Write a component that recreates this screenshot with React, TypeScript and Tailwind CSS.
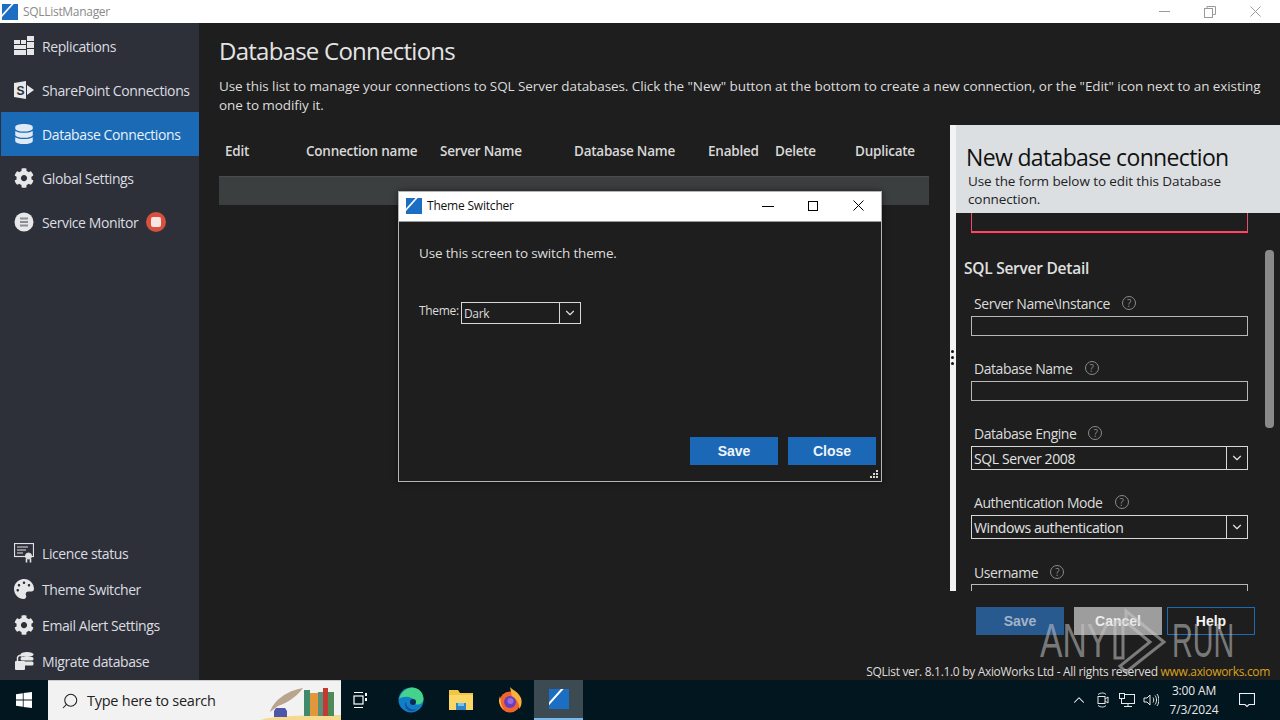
import { ChevronDown, ChevronUp, Search } from "lucide-react";
import { FaCog, FaDatabase, FaPalette } from "react-icons/fa";

const font = "font-['Open_Sans','Liberation_Sans',sans-serif]";

function AppLogo({ className }: { className?: string }) {
  return (
    <svg viewBox="0 0 16 16" className={className}>
      <rect width="16" height="16" fill="#1b6ec2" />
      <path d="M0 10.500L9.500 0h2.200L0 13z" fill="#fff" />
    </svg>
  );
}

function ReplicationsIcon() {
  return (
    <svg viewBox="0 0 20 20" className="h-5 w-5" fill="#e4e6e8">
      <rect x="0" y="4" width="6" height="4" />
      <rect x="0" y="9" width="12" height="4" />
      <rect x="0" y="14" width="12" height="5" />
      <rect x="7" y="4" width="5" height="4" />
      <rect x="13" y="0" width="7" height="5" />
      <rect x="13" y="6" width="7" height="6" />
      <rect x="13" y="13" width="7" height="6" />
    </svg>
  );
}

function SharePointIcon() {
  return (
    <svg viewBox="0 0 20 20" className="h-5 w-5">
      <path d="M0 3l12-2v18L0 17z" fill="#e8e9ea" />
      <path d="M13 5l7 5-7 5z" fill="#e8e9ea" />
      <text x="2.500" y="14.500" fontSize="12" fontWeight="700" fill="#2d3039" fontFamily="Liberation Sans">S</text>
    </svg>
  );
}

function MonitorIcon() {
  return (
    <svg viewBox="0 0 20 20" className="h-5 w-5">
      <circle cx="10" cy="10" r="9.500" fill="#e6e7e8" />
      <path d="M6 6.500h8M6 10h8M6 13.500h8" stroke="#8b8d91" strokeWidth="2" />
    </svg>
  );
}

function LicenceIcon() {
  return (
    <svg viewBox="0 0 20 20" className="h-5 w-5" fill="none" stroke="#dfe1e3">
      <rect x="0.500" y="0.500" width="19" height="13" strokeWidth="1.200" />
      <path d="M3 4h11M3 7h9M3 10h6" strokeWidth="1.200" />
      <circle cx="14.500" cy="13" r="3" fill="#dfe1e3" />
      <path d="M12.500 15.500v4M16.500 15.500v4" strokeWidth="1.600" />
    </svg>
  );
}

function MigrateIcon() {
  return (
    <svg viewBox="0 0 20 20" className="h-5 w-5" fill="#e6e7e8">
      <ellipse cx="13" cy="3.500" rx="6.500" ry="2.500" />
      <rect x="6.500" y="6" width="13" height="3.500" rx="1.500" />
      <rect x="6.500" y="10.500" width="13" height="4" rx="1.500" />
      <rect x="1" y="10" width="10" height="9" rx="1" />
      <path d="M3.500 10V6.500a3 3 0 0 1 5 -1" fill="none" stroke="#e6e7e8" strokeWidth="1.500" />
    </svg>
  );
}

const navTop = [
  { label: "Replications", icon: <ReplicationsIcon /> },
  { label: "SharePoint Connections", icon: <SharePointIcon /> },
  { label: "Database Connections", icon: <FaDatabase className="h-5 w-5 text-[#dfeaf5]" />, active: true },
  { label: "Global Settings", icon: <FaCog className="h-5 w-5 text-[#e6e7e8]" /> },
  { label: "Service Monitor", icon: <MonitorIcon />, badge: true },
];

const navBottom = [
  { label: "Licence status", icon: <LicenceIcon /> },
  { label: "Theme Switcher", icon: <FaPalette className="h-5 w-5 text-[#e6e7e8]" /> },
  { label: "Email Alert Settings", icon: <FaCog className="h-5 w-5 text-[#e6e7e8]" /> },
  { label: "Migrate database", icon: <MigrateIcon /> },
];

const columns = [
  { label: "Edit", className: "w-[81px]" },
  { label: "Connection name", className: "w-[134px]" },
  { label: "Server Name", className: "w-[134px]" },
  { label: "Database Name", className: "w-[134px]" },
  { label: "Enabled", className: "w-[67px]" },
  { label: "Delete", className: "w-[80px]" },
  { label: "Duplicate", className: "w-[70px]" },
];

function Sidebar() {
  return (
    <aside className="flex w-[199px] shrink-0 flex-col justify-between bg-[#2d3039] pt-px pb-px text-[14px] tracking-[-0.4px] text-[#dcdde0]">
      <nav className="flex flex-col">
        {navTop.map((item) => (
          <div
            key={item.label}
            className={
              item.active
                ? "ml-[1px] flex h-11 items-center gap-2 bg-[#1b6ab5] pl-[13px] text-[#e8f1fa]"
                : "flex h-11 items-center gap-2 pl-[14px]"
            }
          >
            {item.icon}
            <span>{item.label}</span>
            {item.badge && (
              <span className="flex h-5 w-5 items-center justify-center rounded-full bg-[#d9503f]">
                <span className="h-[10px] w-[10px] rounded-[2px] bg-[#f5e6e3]" />
              </span>
            )}
          </div>
        ))}
      </nav>
      <nav className="flex flex-col">
        {navBottom.map((item) => (
          <div key={item.label} className="flex h-9 items-center gap-2 pl-[14px]">
            {item.icon}
            <span>{item.label}</span>
          </div>
        ))}
      </nav>
    </aside>
  );
}

function Help() {
  return (
    <span className="ml-[12px] flex h-[14px] w-[14px] items-center justify-center rounded-full border border-[#8a8a8a] text-[10px] leading-none text-[#8a8a8a]">
      ?
    </span>
  );
}

function Label({ text, className }: { text: string; className: string }) {
  return (
    <div className={`ml-[18px] flex h-[18px] items-center text-[14px] tracking-[-0.45px] text-[#dcdcdc] ${className}`}>
      {text}
      <Help />
    </div>
  );
}

function SelectBox({ value, className }: { value: string; className: string }) {
  return (
    <div className={`ml-[15px] flex h-6 w-[277px] items-center border border-[#d8d8d8] pl-[2px] text-[14px] tracking-[-0.4px] text-[#e4e4e4] ${className}`}>
      <span className="flex-1">{value}</span>
      <span className="flex h-full w-[21px] items-center justify-center border-l border-[#d8d8d8]">
        <ChevronDown size={14} strokeWidth={2} />
      </span>
    </div>
  );
}

function ConnectionPanel() {
  return (
    <div className="flex h-[466px]">
      <div className="relative w-[6px] shrink-0 bg-[#f3f3f3]">
        <div className="absolute top-[225px] left-[1px] flex flex-col gap-[3px]">
          {[0, 1, 2].map((i) => (
            <span key={i} className="h-[3px] w-[3px] rounded-full bg-[#111]" />
          ))}
        </div>
      </div>
      <div className="flex min-w-0 flex-1 flex-col">
        <div className="h-[88px] shrink-0 bg-[#dcdfe2] pt-[16px] pl-[10px] text-[#111]">
          <div className="h-[31px] text-[23px] leading-[32px] tracking-[-0.65px]">New database connection</div>
          <div className="ml-[2px] w-[290px] text-[13.5px] leading-[18px] tracking-[-0.1px] text-[#222]">
            Use the form below to edit this Database connection.
          </div>
        </div>
        <div className="flex min-h-0 flex-1">
          <div className="w-[309px] shrink-0 overflow-hidden">
            <div className="ml-[15px] h-5 w-[277px] border-x border-b-2 border-x-[#e8506a] border-b-[#e8506a] shadow-[0_1px_1px_#5a0a12]" />
            <div className="mt-[25px] ml-[8px] h-5 text-[15.5px] leading-5 font-semibold tracking-[-0.25px] text-[#e0e0e0]">
              SQL Server Detail
            </div>
            <Label text="Server Name\Instance" className="mt-[16px]" />
            <div className="mt-[4px] ml-[15px] h-5 w-[277px] border border-[#b8b8b8]" />
            <Label text="Database Name" className="mt-[23px]" />
            <div className="mt-[4px] ml-[15px] h-5 w-[277px] border border-[#b8b8b8]" />
            <Label text="Database Engine" className="mt-[23px]" />
            <SelectBox value="SQL Server 2008" className="mt-[4px]" />
            <Label text="Authentication Mode" className="mt-[23px]" />
            <SelectBox value="Windows authentication" className="mt-[4px]" />
            <Label text="Username" className="mt-[24px]" />
            <div className="mt-[3px] ml-[15px] h-5 w-[277px] border border-[#b8b8b8]" />
          </div>
          <div className="mt-[37px] h-[178px] w-[9px] rounded-[4px] bg-[#8a8a8a]" />
        </div>
      </div>
    </div>
  );
}

function ThemeDialog() {
  return (
    <div className="absolute top-[191px] left-[398px] flex h-[291px] w-[484px] flex-col border border-[#b4b4b4] bg-[#1e1e1e] shadow-[0_0_6px_rgba(0,0,0,0.5)]">
      <div className="flex h-[30px] shrink-0 items-center border-b border-[#9a9a9a] bg-white pb-[2px] pl-[7px] text-[12px] tracking-[-0.2px] text-[#111]">
        <AppLogo className="h-4 w-4" />
        <span className="ml-[5px] flex-1">Theme Switcher</span>
        <div className="mr-[-1px] flex items-center text-black">
          <span className="flex w-[46px] justify-center pl-[2px]">
            <svg viewBox="0 0 12 12" className="h-3 w-3" stroke="currentColor">
              <path d="M0 6.500h12" />
            </svg>
          </span>
          <span className="flex w-[46px] justify-center">
            <svg viewBox="0 0 10 10" className="h-[10px] w-[10px]" fill="none" stroke="currentColor">
              <rect x="0.500" y="0.500" width="9" height="9" />
            </svg>
          </span>
          <span className="flex w-[46px] justify-center pr-[1px]">
            <svg viewBox="0 0 11 11" className="h-[11px] w-[11px]" fill="none" stroke="currentColor">
              <path d="M0.500 0.500l10 10M10.500 0.500l-10 10" />
            </svg>
          </span>
        </div>
      </div>
      <div className="relative flex flex-1 flex-col px-5 pt-[21px] text-[#dcdcdc]">
        <p className="text-[13.5px] leading-5 tracking-[-0.175px]">Use this screen to switch theme.</p>
        <div className="mt-[39px] flex items-center gap-[2px] text-[12px] tracking-[-0.3px]">
          <span className="-mt-[4px]">Theme:</span>
          <div className="flex h-[22px] w-[120px] items-center border border-[#d8d8d8] pl-[2px]">
            <span className="flex-1 pt-[1px]">Dark</span>
            <span className="flex h-full w-[21px] items-center justify-center border-l border-[#d8d8d8]">
              <ChevronDown size={14} strokeWidth={2} />
            </span>
          </div>
        </div>
        <div className="mt-[113px] mr-[-15px] flex justify-end gap-[10px] font-['Liberation_Sans',sans-serif] text-[14px] font-bold text-[#f0f4f8]">
          <button className="h-7 w-[88px] bg-[#1b69b6]">Save</button>
          <button className="h-7 w-[88px] bg-[#1b69b6]">Close</button>
        </div>
        <div className="absolute right-[3px] bottom-[3px] grid grid-cols-3 gap-[1px]">
          {[0, 0, 1, 0, 1, 1, 1, 1, 1].map((on, i) => (
            <span key={i} className={on ? "h-[2px] w-[2px] bg-[#d8d8d8]" : "h-[2px] w-[2px]"} />
          ))}
        </div>
      </div>
    </div>
  );
}

function Watermark() {
  return (
    <div className="pointer-events-none absolute top-[606px] left-[1040px] flex h-[70px] w-[200px] items-center font-['Liberation_Sans',sans-serif] text-[#c8c8c8]/55">
      <span className="w-[70px] origin-left scale-x-[0.7] text-[48px] leading-none whitespace-nowrap">ANY</span>
      <svg viewBox="0 0 56 66" className="ml-[2px] h-[66px] w-[56px]" fill="none" stroke="currentColor" strokeWidth="3">
        <path d="M14 14V3l38 31-38 30-6-6 30-24-24-20" />
        <path d="M3 14v36h8V14z" />
      </svg>
      <span className="ml-[4px] w-[60px] origin-left scale-x-[0.6] text-[48px] leading-none whitespace-nowrap">RUN</span>
    </div>
  );
}

function SearchArt() {
  return (
    <svg viewBox="0 0 80 38" className="h-[38px] w-[80px] shrink-0">
      <path d="M0 38c12-5 60-5 80-5v5z" fill="#f4d98e" />
      <path d="M9 30C12 20 24 9 42 6 36 14 28 20 17 24z" fill="#b9a58e" />
      <path d="M15 26h9l2 3v6H13v-6z" fill="#4c57a8" />
      <rect x="43" y="8" width="6" height="26" fill="#3f8a6c" />
      <rect x="49" y="11" width="8" height="23" fill="#e2983a" />
      <rect x="57" y="10" width="5" height="24" fill="#5a8f7a" />
      <rect x="62" y="6" width="5" height="28" fill="#c33a32" />
      <rect x="67" y="10" width="6" height="24" fill="#4c8a5a" />
    </svg>
  );
}

function EdgeIcon() {
  return (
    <svg viewBox="0 0 26 26" className="h-[26px] w-[26px]">
      <circle cx="13" cy="13" r="12.500" fill="#0f7fc8" />
      <path d="M1 12C3 4 10 .5 14 .5c7 0 11.500 5.500 11.500 11 0 4-3 6-6 6-3 0-5-2-3.500-4-2-4-10-5-15.500-1.500z" fill="#45d28a" />
      <path d="M8 15c0 6 6 9 11 7-6 5-13 1-12-6z" fill="#1b4f9c" />
      <circle cx="15" cy="15" r="3" fill="#0b2b55" />
    </svg>
  );
}

function FolderIcon() {
  return (
    <svg viewBox="0 0 24 22" className="h-[22px] w-6">
      <path d="M0 1h9l2 3h13v17H0z" fill="#f3c544" />
      <rect y="6" width="24" height="15" fill="#fbd766" />
      <rect x="7" y="14" width="10" height="7" fill="#2f87c9" />
      <rect x="9" y="14" width="6" height="3" fill="#7ec1ea" />
    </svg>
  );
}

function FirefoxIcon() {
  return (
    <svg viewBox="0 0 26 26" className="h-[26px] w-[26px]">
      <circle cx="13" cy="15" r="10.500" fill="#f2642c" />
      <path d="M13 0c2 3 8 4 11 11 1 3 1 8-2 11 1-5-2-10-7-12z" fill="#fbb03b" />
      <path d="M3 9c1 4 0 9 4 13-3-1-5-5-5-9z" fill="#ffbd3f" />
      <circle cx="13" cy="15" r="6" fill="#6b3fb8" />
      <circle cx="13.500" cy="14" r="3" fill="#9a6ce0" />
    </svg>
  );
}

function Taskbar() {
  return (
    <footer className="flex h-10 shrink-0 items-center bg-[#02161f] text-white">
      <div className="flex h-full w-12 items-center justify-center">
        <svg viewBox="0 0 16 16" className="h-4 w-4" fill="#fff">
          <path d="M0 2.200l6.800-1v6.400H0zM7.600 1l8.400-1v7.600H7.600zM0 8.400h6.800v6.400L0 13.800zM7.600 8.400H16V16l-8.400-1.100z" />
        </svg>
      </div>
      <div className="flex h-full w-[293px] items-center border-t border-[#ccc] bg-[#f2f2f2] pl-[13px] text-[14.5px] tracking-[-0.25px] text-[#222]">
        <Search size={18} strokeWidth={1.400} className="-scale-x-100" />
        <span className="ml-[8px] flex-1">Type here to search</span>
        <SearchArt />
      </div>
      <div className="flex h-full w-[40px] items-center justify-center">
        <svg viewBox="0 0 16 16" className="h-4 w-4" fill="none" stroke="#fff" strokeWidth="1.200">
          <path d="M1 .5h9M1 15.500h9" />
          <rect x="1" y="4" width="9" height="8" />
          <path d="M13 1v3M13 6v3" strokeWidth="2" />
        </svg>
      </div>
      <div className="ml-[5px] flex h-full w-[50px] items-center justify-center">
        <EdgeIcon />
      </div>
      <div className="flex h-full w-[49px] items-center justify-center">
        <FolderIcon />
      </div>
      <div className="flex h-full w-[49px] items-center justify-center">
        <FirefoxIcon />
      </div>
      <div className="flex h-full w-[49px] items-center justify-center border-b-[2px] border-b-[#79b8e8] bg-[#3c4a52]">
        <AppLogo className="h-5 w-5" />
      </div>
      <div className="flex-1" />
      <div className="flex h-full items-center">
        <span className="flex w-6 justify-center">
          <ChevronUp size={18} strokeWidth={1.400} />
        </span>
        <span className="flex w-6 justify-center">
          <svg viewBox="0 0 16 16" className="h-4 w-4" fill="none" stroke="#e8e8e8">
            <rect x="3" y="4.500" width="7" height="7" />
            <path d="M10 7l3-2v6l-3-2M3 2.500c3-2 6-2 8 0M3 13.500c3 2 6 2 8 0" />
          </svg>
        </span>
        <span className="flex w-6 justify-center">
          <svg viewBox="0 0 16 16" className="h-4 w-4" fill="none" stroke="#e8e8e8">
            <rect x="2.500" y="2.500" width="13" height="9" />
            <path d="M9 11.500v3M5 14.500h8" />
            <rect x="0.500" y="1.500" width="5" height="5" fill="#02161f" />
          </svg>
        </span>
        <span className="flex w-6 justify-center">
          <svg viewBox="0 0 16 16" className="h-4 w-4" fill="none" stroke="#e8e8e8">
            <path d="M1 6v4h3l3 3V3L4 6zM10 5.500c1 1.500 1 3.500 0 5M12 3.500c2 2.500 2 6.500 0 9M14 2c2.500 3.500 2.500 8.500 0 12" />
          </svg>
        </span>
        <div className="flex w-[62px] flex-col items-center text-[12px] leading-[19px] tracking-[-0.15px] text-[#e8e8e8]">
          <span>3:00 AM</span>
          <span>7/3/2024</span>
        </div>
        <span className="mr-[25px] ml-[14px] flex w-4 justify-center">
          <svg viewBox="0 0 16 16" className="h-4 w-4" fill="none" stroke="#f0f0f0" strokeWidth="1.100">
            <path d="M0.500 1.500h15v11H10l-2 2-2-2H0.500z" />
          </svg>
        </span>
      </div>
    </footer>
  );
}

export default function App() {
  return (
    <div className={`relative flex h-[720px] w-[1280px] flex-col overflow-hidden bg-[#1e1e1e] ${font}`}>
      <header className="flex h-[23px] shrink-0 items-center bg-white pl-[2px] text-[12px] tracking-[-0.3px] text-[#8a8a8a]">
        <AppLogo className="h-4 w-4" />
        <span className="ml-[5px] flex-1">SQLListManager</span>
        <div className="mr-[1px] flex items-center text-[#9a9a9a]">
          <span className="flex w-[46px] justify-center">
            <svg viewBox="0 0 11 11" className="h-[11px] w-[11px]" stroke="currentColor">
              <path d="M0 5.500h11" />
            </svg>
          </span>
          <span className="flex w-[46px] justify-center">
            <svg viewBox="0 0 12 12" className="h-3 w-3" fill="none" stroke="currentColor">
              <rect x="0.500" y="2.500" width="8" height="9" />
              <path d="M3 2.500v-2h8.500v8h-3" />
            </svg>
          </span>
          <span className="flex w-[46px] justify-center pr-[2px]">
            <svg viewBox="0 0 11 11" className="h-[11px] w-[11px]" fill="none" stroke="currentColor">
              <path d="M0.500 0.500l10 10M10.500 0.500l-10 10" />
            </svg>
          </span>
        </div>
      </header>
      <div className="flex min-h-0 flex-1">
        <Sidebar />
        <main className="flex min-w-0 flex-1 flex-col">
          <div className="h-[102px] shrink-0 pt-[12px] pl-[20px] text-[#e4e4e4]">
            <h1 className="h-[32px] text-[24px] leading-[32px] tracking-[-0.75px]">Database Connections</h1>
            <p className="mt-[10px] w-[1045px] text-[13.5px] leading-[19px] tracking-[-0.08px] text-[#dcdcdc]">
              Use this list to manage your connections to SQL Server databases. Click the "New" button at the bottom to
              create a new connection, or the "Edit" icon next to an existing one to modifiy it.
            </p>
          </div>
          <div className="flex min-h-0 flex-1">
            <section className="ml-[20px] w-[710px] shrink-0">
              <div className="flex h-[51px] items-center pt-[2px] pl-[6px] text-[13.5px] font-semibold tracking-[-0.24px] text-[#d8d8d8]">
                {columns.map((col) => (
                  <span key={col.label} className={`${col.className} whitespace-nowrap`}>
                    {col.label}
                  </span>
                ))}
              </div>
              <div className="h-[29px] border-t border-[#4a4d4d] bg-[#3c3f3f]" />
            </section>
            <section className="ml-[21px] flex min-w-0 flex-1 flex-col">
              <ConnectionPanel />
              <div className="mt-[16px] ml-[26px] flex font-['Liberation_Sans',sans-serif] text-[14px] font-bold">
                <button className="h-7 w-[88px] bg-[#28598f] text-[#a4b4c6]">Save</button>
                <button className="ml-[10px] h-7 w-[88px] bg-[#9d9d9d] text-[#ececec]">Cancel</button>
                <button className="ml-[5px] h-7 w-[88px] border border-[#1d69b3] text-[#f4f4f4]">Help</button>
              </div>
              <div className="mt-[28px] mr-[10px] flex justify-end text-[12px] tracking-[-0.32px] whitespace-nowrap text-[#dcdcdc]">
                <span className="shrink-0">
                  SQList ver. 8.1.1.0 by AxioWorks Ltd - All rights reserved{" "}
                  <span className="text-[#d9a21b]">www.axioworks.com</span>
                </span>
              </div>
            </section>
          </div>
        </main>
      </div>
      <Taskbar />
      <ThemeDialog />
      <Watermark />
    </div>
  );
}
